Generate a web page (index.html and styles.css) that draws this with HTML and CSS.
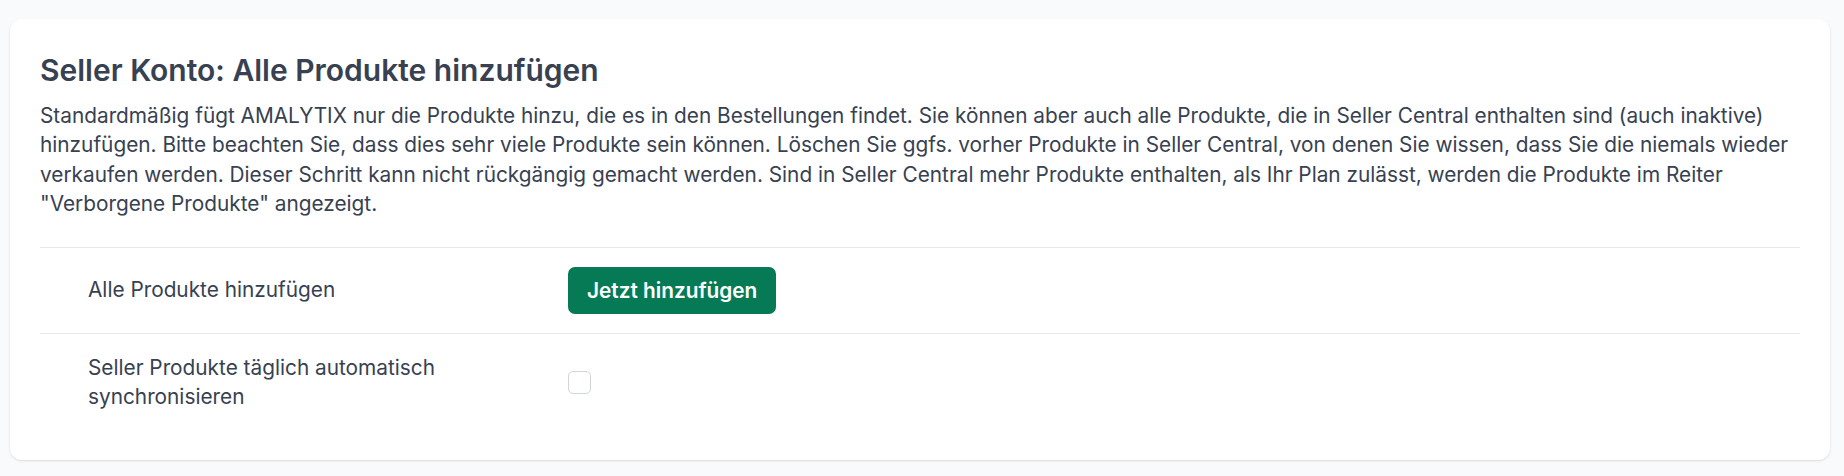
FILE: index.html
```html
<!DOCTYPE html>
<html lang="de">
<head>
    <meta charset="UTF-8">
    <meta name="viewport" content="width=device-width, initial-scale=1.0">
    <title>Seller Konto</title>
    <link rel="stylesheet" href="styles.css">
</head>
<body>
    <div class="page">
        <div class="card">
            <h2 class="card-title">Seller Konto: Alle Produkte hinzufügen</h2>
            <p class="card-text">Standardmäßig fügt AMALYTIX nur die Produkte hinzu, die es in den Bestellungen findet. Sie können aber auch alle Produkte, die in Seller Central enthalten sind (auch inaktive) hinzufügen. Bitte beachten Sie, dass dies sehr viele Produkte sein können. Löschen Sie ggfs. vorher Produkte in Seller Central, von denen Sie wissen, dass Sie die niemals wieder verkaufen werden. Dieser Schritt kann nicht rückgängig gemacht werden. Sind in Seller Central mehr Produkte enthalten, als Ihr Plan zulässt, werden die Produkte im Reiter "Verborgene Produkte" angezeigt.</p>
            <div class="settings">
                <div class="setting-row">
                    <span class="setting-label">Alle Produkte hinzufügen</span>
                    <div class="setting-control">
                        <button class="btn-green" type="button">Jetzt hinzufügen</button>
                    </div>
                </div>
                <div class="setting-row">
                    <label class="setting-label" for="sync">Seller Produkte täglich automatisch synchronisieren</label>
                    <div class="setting-control">
                        <input type="checkbox" id="sync" class="check">
                    </div>
                </div>
            </div>
        </div>
    </div>
</body>
</html>
```

FILE: styles.css
```css
body{
    margin: 0;
    background-color: #f9fafb;
    color: #374151;
    font-family: Inter, "Noto Sans", sans-serif;
}
.page{
    padding: 19px 14px 16px 10px;
}
.card{
    background: #fff;
    border-radius: 12px;
    box-shadow: 0 1px 3px rgba(0,0,0,0.08), 0 1px 2px rgba(0,0,0,0.05);
    padding: 33px 30px 30px 30px;
}
.card-title{
    margin: 0 0 13px 0;
    font-size: 30px;
    line-height: 36px;
    font-weight: 600;
}
.card-text{
    margin: 0;
    font-size: 20.8px;
    line-height: 29.4px;
}
.settings{
    margin-top: 28px;
    border-top: 1px solid #e5e7eb;
}
.setting-row{
    display: grid;
    grid-template-columns: 460px 1fr;
    column-gap: 20px;
    align-items: center;
    padding: 19px 0 19px 48px;
}
.setting-row + .setting-row{
    border-top: 1px solid #e5e7eb;
}
.setting-label{
    font-size: 20.8px;
    line-height: 29.4px;
}
.setting-control{
    display: flex;
    align-items: center;
}
.btn-green{
    background: #057a55;
    color: #fff;
    border: none;
    border-radius: 7px;
    height: 47px;
    padding: 0 19px;
    font-family: inherit;
    font-size: 20.8px;
    font-weight: 600;
    cursor: pointer;
}
.check{
    -webkit-appearance: none;
    appearance: none;
    margin: 0;
    width: 23px;
    height: 23px;
    border: 1px solid #d1d5db;
    border-radius: 5px;
    background: #fff;
}
```
